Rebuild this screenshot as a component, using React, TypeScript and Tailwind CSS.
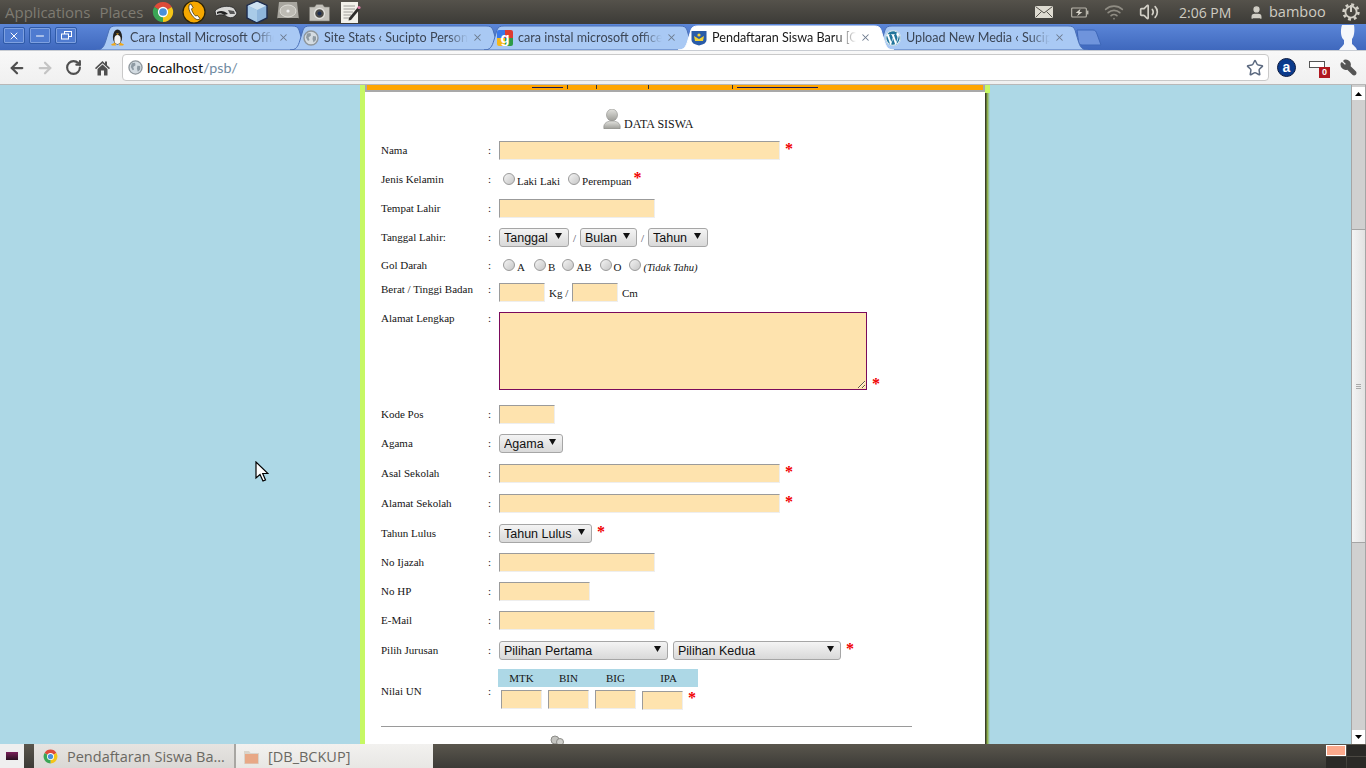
import React from "react";
import { FaWordpress } from "react-icons/fa";
import { ArrowLeft, ArrowRight, RotateCw, Wifi, Volume2, User, Star, Wrench, X, Minus } from "lucide-react";

function ChromeLogo({ size }: { size: number }) {
  return (
    <svg width={size} height={size} viewBox="0 0 24 24" className="shrink-0">
      <path d="M12 12L2.47 6.5A11 11 0 0 1 21.53 6.5Z" fill="#dd4b39" />
      <path d="M12 12L21.53 6.5A11 11 0 0 1 12 23Z" fill="#f5c518" />
      <path d="M12 12L12 23A11 11 0 0 1 2.47 6.5Z" fill="#3aa655" />
      <circle cx="12" cy="12" r="5.6" fill="#fff" />
      <circle cx="12" cy="12" r="4.2" fill="#4a90d9" />
    </svg>
  );
}

function GlobeIcon({ size }: { size: number }) {
  return (
    <svg width={size} height={size} viewBox="0 0 16 16" className="shrink-0">
      <circle cx="8" cy="8" r="7" fill="#d4dce2" stroke="#8e969c" strokeWidth="1.4" />
      <path d="M4 3.5L7.5 3L8 5.5L5.5 7.5L6.5 10L5 11L3 7.5Z" fill="#8e9aa3" />
      <path d="M10 6L13 6.5L13 10L10.5 12.5L9.5 9Z" fill="#8e9aa3" />
    </svg>
  );
}

function Tux() {
  return (
    <svg width="15" height="17" viewBox="0 0 15 17" className="shrink-0">
      <ellipse cx="7.5" cy="8" rx="4.6" ry="7.5" fill="#222" />
      <ellipse cx="7.5" cy="10.5" rx="3.2" ry="4.6" fill="#f4f4f4" />
      <path d="M6 4.5H9L7.5 6Z" fill="#f0a818" />
      <path d="M1 15.5L5 13.5L6 16.5H2Z" fill="#f0a818" />
      <path d="M14 15.5L10 13.5L9 16.5H13Z" fill="#f0a818" />
    </svg>
  );
}

function GoogleFav() {
  return (
    <span className="relative w-[16px] h-[16px] shrink-0 rounded-[2px] overflow-hidden grid grid-cols-2 grid-rows-2">
      <span className="bg-[#3b78e7]" />
      <span className="bg-[#dd3b30]" />
      <span className="bg-[#f6b81a]" />
      <span className="bg-[#2e9b46]" />
      <span className="absolute inset-0 flex items-center justify-center text-white font-bold text-[15px] leading-[12px] font-['Liberation_Sans',sans-serif]">g</span>
    </span>
  );
}

function Crest() {
  return (
    <svg width="16" height="16" viewBox="0 0 16 16" className="shrink-0">
      <path d="M0.5 1H15.5V10Q15.5 14 8 15.5Q0.5 14 0.5 10Z" fill="#2a5ca8" />
      <path d="M3 6L8 9L13 6L12 11H4Z" fill="#f3d233" />
      <circle cx="8" cy="5" r="1.6" fill="#f3d233" />
    </svg>
  );
}

function TabShape({ fill, stroke }: { fill: string; stroke: string }) {
  return (
    <svg width="216" height="25" viewBox="0 0 216 25" className="absolute left-0 top-0">
      <path
        d="M0 25C6 25 8 22 10 15L13 5C14 2 16 1 20 1L196 1C200 1 202 2 203 5L206 15C208 22 210 25 216 25Z"
        fill={fill}
        stroke={stroke}
        strokeWidth="1"
      />
    </svg>
  );
}

type TabProps = { icon: React.ReactNode; title: string; active?: boolean };

function Tab({ icon, title, active }: TabProps) {
  return (
    <div className={active ? "relative w-[216px] h-[25px] -mr-[22px] z-10 shrink-0" : "relative w-[216px] h-[25px] -mr-[22px] shrink-0"}>
      <TabShape fill={active ? "#ffffff" : "#a9c9f4"} stroke={active ? "#ffffff" : "#4a70b8"} />
      <div className="relative flex items-center h-full pl-[13px] pr-[14px] gap-[5px]">
        <span className="w-[16px] flex justify-center shrink-0">{icon}</span>
        <span className={active ? "w-[144px] pt-[1px] whitespace-nowrap text-[12.6px] text-[#1a1a1a] [mask-image:linear-gradient(to_right,black_86%,transparent)]" : "w-[144px] pt-[1px] whitespace-nowrap text-[12.6px] text-[#3c4656] [mask-image:linear-gradient(to_right,black_86%,transparent)]"}>
          {title}
        </span>
        <X size={11} strokeWidth={2.2} className="-ml-[1px] shrink-0 text-[#6c7a8c]" />
      </div>
    </div>
  );
}

function WinBtn({ children }: { children: React.ReactNode }) {
  return (
    <span className="w-[22px] h-[17px] flex items-center justify-center rounded-[2px] border border-[#2f5aa8] bg-[#4f7bd0] shadow-[inset_0_0_0_1px_#7ea0e0] text-white">
      {children}
    </span>
  );
}

function TopPanel() {
  return (
    <div className="h-[24px] shrink-0 flex items-center bg-gradient-to-b from-[#55524b] to-[#3c3b37] text-[#7e7b72] text-[15px]">
      <span className="ml-[5px]">Applications</span>
      <span className="ml-[9px]">Places</span>
      <span className="ml-[9px] flex items-center gap-[8px]">
        <ChromeLogo size={22} />
        <svg width="24" height="24" viewBox="0 0 24 24" className="shrink-0">
          <circle cx="12" cy="12" r="11" fill="#f6a800" stroke="#2a2208" strokeWidth="1.2" />
          <path d="M7.5 4.5C5.5 8 8 14 13 18.5C15 20 17 20 18 18.5L15.5 15.5L13.5 16C11.5 14 10 11.5 9.5 9L11 7.5L9 4Z" fill="#fff" stroke="#2a2208" strokeWidth="0.7" />
        </svg>
        <svg width="24" height="15" viewBox="0 0 24 15" className="shrink-0">
          <path d="M1 6C5 1 15 0 20 3L23 8C21 13 16 14 12 11C8 9 4 10 2 11Z" fill="#d8d8d6" stroke="#222" strokeWidth="0.8" />
          <path d="M3 7C7 5 11 6 14 9L10 10C8 8 5 8 3 9Z" fill="#222" />
          <path d="M14 5L20 6L21 9L16 9Z" fill="#555" />
        </svg>
        <svg width="22" height="24" viewBox="0 0 22 24" className="shrink-0">
          <path d="M11 1L21 5.5V18L11 23L1 18V5.5Z" fill="#8fb6dc" stroke="#1f2d4e" strokeWidth="1.4" />
          <path d="M11 1.8L20 5.8L11 10L2 5.8Z" fill="#cfe2f2" />
          <path d="M11 10V22L2 17.6V5.8Z" fill="#a9cbe8" />
        </svg>
        <svg width="24" height="23" viewBox="0 0 24 23" className="shrink-0">
          <path d="M3 1H21L23 19H1Z" fill="#a8a69f" />
          <rect x="1" y="17" width="22" height="5" rx="1" fill="#3e3d39" />
          <ellipse cx="12" cy="10" rx="8" ry="6" fill="#bdbbb4" stroke="#dddcd6" />
          <circle cx="12" cy="10" r="1.6" fill="#eee" />
        </svg>
        <svg width="23" height="19" viewBox="0 0 22 19" className="shrink-0">
          <path d="M1 4H6L8 1.5H14L16 4H21V18H1Z" fill="#c4c2bb" stroke="#77766f" strokeWidth="0.6" />
          <circle cx="11" cy="10.5" r="5" fill="#4b4a46" stroke="#e4e3de" strokeWidth="1.4" />
          <circle cx="11" cy="10.5" r="2" fill="#1f2f50" />
        </svg>
        <svg width="21" height="23" viewBox="0 0 21 23" className="ml-[1px] shrink-0">
          <rect x="1" y="1" width="17" height="21" fill="#f2f1ea" />
          <path d="M3.5 5H15M3.5 8H15M3.5 11H13M3.5 14H11M3.5 17H10" stroke="#8a8a85" strokeWidth="0.8" />
          <path d="M9 17L18 6L20 8L11 19L8.5 19.5Z" fill="#2f2e2b" />
          <circle cx="19" cy="6.5" r="1.6" fill="#d77aa0" />
        </svg>
      </span>
      <span className="ml-auto flex items-center text-[#d2cfc6]">
        <svg width="18" height="12" viewBox="0 0 18 12" className="shrink-0">
          <rect width="18" height="12" fill="#dedbd1" />
          <path d="M0.5 0.5L9 7L17.5 0.5M0.5 11.5L6.5 5.5M17.5 11.5L11.5 5.5" fill="none" stroke="#55524b" strokeWidth="1" />
        </svg>
        <svg width="18" height="11" viewBox="0 0 19 11" className="ml-[18px] shrink-0">
          <rect x="0.7" y="0.7" width="15.5" height="9.6" rx="1" fill="none" stroke="#b9b6ac" strokeWidth="1.2" />
          <rect x="16.6" y="3.5" width="1.8" height="4" fill="#b9b6ac" />
          <path d="M10 1.5L5 6H8L6.5 9.5L12 5H9Z" fill="#d9d6cc" />
        </svg>
        <Wifi size={20} strokeWidth={2} className="ml-[15px] text-[#8f8c83]" />
        <Volume2 size={20} strokeWidth={2} className="ml-[15px]" />
        <span className="ml-[20px] w-[52px] text-[14px] text-[#cfccc2] whitespace-nowrap">2:06 PM</span>
        <User size={15} fill="#d2cfc6" className="ml-[18px]" />
        <span className="ml-[5px] w-[57px] text-[14.5px] text-[#cfccc2]">bamboo</span>
        <svg width="20" height="20" viewBox="0 0 20 20" className="ml-[15px] mr-[5px] shrink-0" fill="none" stroke="#d2cfc6">
          <circle cx="10" cy="10" r="7.4" strokeWidth="2.6" strokeDasharray="2.9 2.9" />
          <circle cx="10" cy="10" r="5.6" strokeWidth="1.8" />
          <path d="M10 3V10" strokeWidth="2" />
        </svg>
      </span>
    </div>
  );
}

function TabStrip() {
  return (
    <div className="h-[26px] shrink-0 flex items-end bg-gradient-to-b from-[#5b86d8] to-[#3f68bd] font-['Lato',sans-serif]">
      <div className="flex items-start gap-[4px] self-start mt-[3px] ml-[3px]">
        <WinBtn><X size={12} strokeWidth={2} /></WinBtn>
        <WinBtn><Minus size={12} strokeWidth={2} /></WinBtn>
        <WinBtn>
          <svg width="11" height="9" viewBox="0 0 11 9" fill="none" stroke="#fff">
            <rect x="3.5" y="0.5" width="7" height="5" />
            <rect x="0.5" y="3" width="7" height="5" fill="#4f7bd0" />
          </svg>
        </WinBtn>
      </div>
      <div className="flex ml-[19px]">
        <Tab icon={<Tux />} title="Cara Install Microsoft Offic" />
        <Tab icon={<GlobeIcon size={16} />} title="Site Stats ‹ Sucipto Person" />
        <Tab icon={<GoogleFav />} title="cara instal microsoft office" />
        <Tab active icon={<Crest />} title="Pendaftaran Siswa Baru [C" />
        <Tab icon={<FaWordpress size={16} color="#21759b" className="bg-white rounded-full" />} title="Upload New Media ‹ Sucipt" />
      </div>
      <svg width="26" height="17" viewBox="0 0 26 17" className="ml-[10px] mb-[4px] shrink-0">
        <path d="M1 1H17C19 1 20 2 21 5L25 16H6C4 16 3 15 2.5 13Z" fill="#6f94dc" stroke="#3d66b8" />
      </svg>
      <svg width="20" height="25" viewBox="0 0 20 25" className="ml-auto mr-[9px] shrink-0">
        <path d="M5 0H17C18 6 17 12 15 14L15 19C17 21 19 22 20 25H2C4 22 6 21 7 19L7 15C4 13 3 6 5 0Z" fill="#f4f7fb" />
      </svg>
    </div>
  );
}

function Toolbar() {
  return (
    <div className="h-[35px] shrink-0 flex items-center bg-gradient-to-b from-[#f8f8f8] to-[#f0f0f0] border-b border-b-[#b8b8b8] border-t border-t-[#c8ccd2] font-['Lato',sans-serif]">
      <ArrowLeft size={18} strokeWidth={3} className="ml-[8px] text-[#4f4f4f]" />
      <ArrowRight size={18} strokeWidth={3} className="ml-[10px] text-[#c4c4c4]" />
      <RotateCw size={17} strokeWidth={3} className="ml-[11px] text-[#4f4f4f]" />
      <svg width="17" height="16" viewBox="0 0 17 16" className="ml-[12px] shrink-0">
        <path d="M8.5 1L1 8L2 9.2L8.5 3.2L15 9.2L16 8L13 5.2V1.5H11V3.4Z" fill="#4f4f4f" />
        <path d="M3.5 9L8.5 4.5L13.5 9V15.5H10V10.5H7V15.5H3.5Z" fill="#4f4f4f" />
      </svg>
      <div className="ml-[11px] w-[1147px] h-[27px] flex items-center bg-white border border-[#c9c9c9] rounded-[4px]">
        <span className="ml-[5px]"><GlobeIcon size={15} /></span>
        <span className="ml-[4px] text-[14.3px] text-[#111]">localhost</span>
        <span className="text-[14.3px] text-[#6f8aa0]">/psb/</span>
        <Star size={18} strokeWidth={2} className="ml-auto mr-[4px] text-[#5c6a80]" fill="#fff" />
      </div>
      <span className="ml-[8px] w-[19px] h-[19px] rounded-full bg-[#0a3a8c] border border-[#0b1a40] text-white text-[14px] font-bold leading-[16px] text-center font-['Liberation_Sans',sans-serif]">a</span>
      <span className="relative ml-[13px] w-[20px] h-[14px]">
        <span className="absolute left-0 top-0 w-[16px] h-[7px] bg-white border border-[#555]" />
        <span className="absolute right-[-1px] bottom-[-3px] w-[11px] h-[11px] bg-[#b01820] text-white text-[9px] font-bold leading-[11px] text-center font-['Liberation_Sans',sans-serif]">0</span>
      </span>
      <Wrench size={17} strokeWidth={2.6} fill="#555" className="ml-[11px] text-[#555] -scale-x-100" />
    </div>
  );
}

function Field({ className }: { className: string }) {
  return (
    <input
      type="text"
      className={`${className} h-[19px] shrink-0 bg-[#fee3ae] border border-t-[#9b9b9b] border-l-[#9b9b9b] border-r-[#eeeeee] border-b-[#eeeeee]`}
    />
  );
}

function Req({ className }: { className?: string }) {
  return (
    <span className={`${className ?? ""} text-[#f00000] font-bold text-[16px] leading-[15px] h-[19px] self-start font-['Liberation_Serif',serif]`}>*</span>
  );
}

function Pick({ label, className }: { label: string; className: string }) {
  return (
    <span className={`${className} relative h-[19px] shrink-0`}>
      <select className="appearance-none w-full h-full pl-[4px] pt-[1px] rounded-[3px] border border-[#a6a6a6] bg-gradient-to-b from-[#f4f4f4] to-[#d9d9d9] text-[12.5px] leading-[16px] text-[#111] font-['Liberation_Sans',sans-serif]">
        <option>{label}</option>
      </select>
      <svg width="7" height="6" viewBox="0 0 7 6" className="absolute right-[7px] top-[5px] pointer-events-none">
        <path d="M0 0H7L3.5 6Z" fill="#111" />
      </svg>
    </span>
  );
}

function Radio({ className, name }: { className?: string; name: string }) {
  return (
    <input
      type="radio"
      name={name}
      className={`${className ?? ""} appearance-none w-[12px] h-[12px] shrink-0 rounded-full border border-[#9a9a9a] bg-gradient-to-br from-[#f4f4f4] to-[#c6c6c6]`}
    />
  );
}

function Row({ label, className, labelClass, children }: { label: string; className: string; labelClass?: string; children: React.ReactNode }) {
  return (
    <div className={`${className} grid grid-cols-[107px_11px_1fr]`}>
      <span className={`${labelClass ?? ""} leading-[19px]`}>{label}</span>
      <span className={`${labelClass ?? ""} leading-[19px]`}>:</span>
      <div className="flex items-start min-w-0">{children}</div>
    </div>
  );
}

function Form() {
  return (
    <form className="pl-[16px] text-[11px] text-[#151515] font-['Liberation_Serif',serif]">
      <div className="h-[49px] flex items-end pl-[222px] gap-[3px] text-[12px] leading-[13px]">
        <svg width="18" height="20" viewBox="0 0 18 20" className="shrink-0 mb-[12px]">
          <defs>
            <linearGradient id="silver" x1="0" y1="0" x2="0" y2="1">
              <stop offset="0" stopColor="#e2e2de" />
              <stop offset="1" stopColor="#9c9c97" />
            </linearGradient>
          </defs>
          <ellipse cx="9" cy="6" rx="5.5" ry="6" fill="url(#silver)" stroke="#8c8c88" strokeWidth="0.6" />
          <path d="M1 20C0 16 2 12 9 12C16 12 18 16 17 20Z" fill="url(#silver)" stroke="#8c8c88" strokeWidth="0.6" />
        </svg>
        <span className="mb-[10px]">DATA SISWA</span>
      </div>
      <Row label="Nama" className="h-[29px]">
        <Field className="w-[281px]" />
        <Req className="ml-[5px]" />
      </Row>
      <Row label="Jenis Kelamin" className="h-[29px]">
        <span className="flex items-start h-[19px] leading-[21px]">
          <Radio name="jk" className="ml-[4px] mt-[3px]" />
          <span className="ml-[2px] mt-[1px]">Laki Laki</span>
          <Radio name="jk" className="ml-[8px] mt-[3px]" />
          <span className="ml-[2px] mt-[1px]">Perempuan</span>
          <Req className="ml-[2px]" />
        </span>
      </Row>
      <Row label="Tempat Lahir" className="h-[29px]">
        <Field className="w-[156px]" />
      </Row>
      <Row label="Tanggal Lahir:" className="h-[29px]">
        <Pick label="Tanggal" className="w-[70px]" />
        <span className="w-[11px] text-center leading-[21px] text-[#445]">/</span>
        <Pick label="Bulan" className="w-[57px]" />
        <span className="w-[11px] text-center leading-[21px] text-[#445]">/</span>
        <Pick label="Tahun" className="w-[60px]" />
      </Row>
      <Row label="Gol Darah" className="h-[26px]" labelClass="-mt-[1px]">
        <span className="flex items-start h-[19px] leading-[21px]">
          <Radio name="gd" className="ml-[4px] mt-[2px]" />
          <span className="ml-[2px]">A</span>
          <Radio name="gd" className="ml-[9px] mt-[2px]" />
          <span className="ml-[2px]">B</span>
          <Radio name="gd" className="ml-[7px] mt-[2px]" />
          <span className="ml-[2px]">AB</span>
          <Radio name="gd" className="ml-[8px] mt-[2px]" />
          <span className="ml-[2px]">O</span>
          <Radio name="gd" className="ml-[7px] mt-[2px]" />
          <span className="ml-[3px] italic text-[10.6px]">(Tidak Tahu)</span>
        </span>
      </Row>
      <Row label="Berat / Tinggi Badan" className="h-[29px]" labelClass="-mt-[3px]">
        <Field className="w-[46px]" />
        <span className="ml-[4px] w-[23px] leading-[21px]">Kg /</span>
        <Field className="w-[46px]" />
        <span className="ml-[4px] leading-[21px]">Cm</span>
      </Row>
      <Row label="Alamat Lengkap" className="h-[93px]" labelClass="-mt-[3px]">
        <textarea className="w-[368px] h-[78px] shrink-0 bg-[#fee3ae] border border-[#7a0a5c]" />
        <Req className="ml-[5px] mt-[64px]" />
      </Row>
      <Row label="Kode Pos" className="h-[29px]">
        <Field className="w-[56px]" />
      </Row>
      <Row label="Agama" className="h-[30px]">
        <Pick label="Agama" className="w-[64px]" />
      </Row>
      <Row label="Asal Sekolah" className="h-[30px]">
        <Field className="w-[281px]" />
        <Req className="ml-[5px]" />
      </Row>
      <Row label="Alamat Sekolah" className="h-[30px]">
        <Field className="w-[281px]" />
        <Req className="ml-[5px]" />
      </Row>
      <Row label="Tahun Lulus" className="h-[29px]">
        <Pick label="Tahun Lulus" className="w-[93px]" />
        <Req className="ml-[5px]" />
      </Row>
      <Row label="No Ijazah" className="h-[29px]">
        <Field className="w-[156px]" />
      </Row>
      <Row label="No HP" className="h-[29px]">
        <Field className="w-[91px]" />
      </Row>
      <Row label="E-Mail" className="h-[30px]">
        <Field className="w-[156px]" />
      </Row>
      <Row label="Pilih Jurusan" className="h-[28px]">
        <Pick label="Pilihan Pertama" className="w-[169px]" />
        <Pick label="Pilihan Kedua" className="w-[168px] ml-[5px]" />
        <Req className="ml-[5px]" />
      </Row>
      <div className="h-[41px] grid grid-cols-[107px_11px_1fr] items-center">
        <span className="pt-[3px]">Nilai UN</span>
        <span className="pt-[3px]">:</span>
        <div className="-ml-[1px]">
          <div className="w-[200px] h-[18px] grid grid-cols-[47px_47px_47px_59px] text-center leading-[18px] bg-[#add8e6]">
            <span>MTK</span>
            <span>BIN</span>
            <span>BIG</span>
            <span>IPA</span>
          </div>
          <div className="flex items-start mt-[3px] pl-[3px] gap-[6px] h-[20px]">
            <Field className="w-[41px]" />
            <Field className="w-[41px]" />
            <Field className="w-[41px]" />
            <Field className="w-[41px] mt-[1px]" />
            <Req className="-ml-[1px]" />
          </div>
        </div>
      </div>
      <hr className="mt-[16px] w-[531px] border-t border-[#9a9a9a]" />
      <div className="mt-[8px] ml-[169px]">
        <svg width="14" height="16" viewBox="0 0 14 16">
          <circle cx="5" cy="5" r="4" fill="#c4c4c0" stroke="#8c8c88" />
          <circle cx="10" cy="7" r="3.5" fill="#d0d0cc" stroke="#8c8c88" />
        </svg>
      </div>
    </form>
  );
}

function Scrollbar() {
  return (
    <div className="w-[15px] shrink-0 flex flex-col bg-[#d0d0d0] border-x border-[#a5a5a5] pt-[2px]">
      <div className="h-[13px] shrink-0 bg-white flex items-center justify-center">
        <svg width="7" height="4" viewBox="0 0 7 4"><path d="M0 4L3.5 0L7 4Z" fill="#000" /></svg>
      </div>
      <div className="h-[129px] shrink-0" />
      <div className="h-[314px] shrink-0 flex flex-col items-center justify-center gap-[1px] border-y border-[#a5a5a5] bg-gradient-to-r from-[#f4f4f4] to-[#e2e2e2]">
        <span className="w-[5px] h-px bg-[#aaa]" />
        <span className="w-[5px] h-px bg-[#aaa]" />
        <span className="w-[5px] h-px bg-[#aaa]" />
      </div>
      <div className="flex-1" />
      <div className="h-[14px] shrink-0 bg-white flex items-center justify-center">
        <svg width="7" height="4" viewBox="0 0 7 4"><path d="M0 0L3.5 4L7 0Z" fill="#000" /></svg>
      </div>
    </div>
  );
}

function Page() {
  return (
    <div className="relative flex-1 min-h-0 flex overflow-hidden bg-[#add8e6]">
      <div className="flex-1 flex justify-center pr-[1px]">
        <div className="w-[630px] flex">
          <div className="w-[5px] bg-[#c6f864] shrink-0" />
          <div className="w-[620px] shrink-0 bg-white">
            <div className="h-[7px] bg-[#ffa500] border-x-2 border-b-2 border-[#a9a9a9] flex items-start pl-[165px]">
              <span className="w-[31px] h-px mt-[2px] bg-[#1a1a55]" />
              <span className="ml-[4px] w-px h-[4px] bg-[#333]" />
              <span className="ml-[28px] w-px h-[4px] bg-[#333]" />
              <span className="ml-[51px] w-px h-[4px] bg-[#333]" />
              <span className="ml-[83px] w-px h-[4px] bg-[#333]" />
              <span className="ml-[4px] w-[81px] h-px mt-[2px] bg-[#1a1a55]" />
            </div>
            <Form />
          </div>
          <div className="w-[5px] shrink-0 flex flex-col">
            <div className="h-[8px] bg-[#c6f864]" />
            <div className="flex-1 bg-gradient-to-r from-[#26261c] via-[#8fb04e] to-[#add8e6]" />
          </div>
        </div>
      </div>
      <Scrollbar />
      <svg width="14" height="21" viewBox="0 0 14 21" className="absolute left-[255px] top-[376px]">
        <path d="M1 1V17L5 13.5L8 20L10.5 19L7.7 12.5H13Z" fill="#fff" stroke="#000" strokeWidth="1.2" />
      </svg>
    </div>
  );
}

function BottomPanel() {
  return (
    <div className="h-[24px] shrink-0 flex items-stretch bg-gradient-to-b from-[#5a564d] to-[#3c3b37] font-['Open_Sans',sans-serif] text-[14.5px] text-[#6a6862]">
      <div className="w-[24px] flex items-center justify-center bg-[#efefef]">
        <span className="w-[14px] h-[10px] bg-gradient-to-b from-[#7b1f5a] to-[#2a1020] border border-[#eee]" />
      </div>
      <div className="w-[10px]" />
      <div className="w-[202px] flex items-center pt-[1px] bg-gradient-to-b from-[#e6e4e1] to-[#dad8d5] border-r-2 border-r-[#a8a6a2]">
        <span className="ml-[9px]"><ChromeLogo size={15} /></span>
        <span className="ml-[9px] whitespace-nowrap">Pendaftaran Siswa Ba…</span>
      </div>
      <div className="w-[197px] flex items-center pt-[1px] bg-gradient-to-b from-[#f2f1ef] to-[#e8e7e4]">
        <svg width="15" height="14" viewBox="0 0 15 14" className="ml-[8px] shrink-0">
          <path d="M0 1H5L6.5 3H15V14H0Z" fill="#d9d4cb" />
          <path d="M1 4H14V13.5H1Z" fill="#e8a886" />
        </svg>
        <span className="ml-[9px]">[DB_BCKUP]</span>
      </div>
      <div className="ml-auto w-[40px] grid grid-cols-2 grid-rows-2 gap-px pt-px">
        <span className="bg-[#fba98c] border border-white" />
        <span className="bg-[#2b2a27]" />
        <span className="bg-[#2b2a27]" />
        <span className="bg-[#2b2a27]" />
      </div>
    </div>
  );
}

export default function App() {
  return (
    <div className="w-[1366px] h-[768px] flex flex-col overflow-hidden font-['Open_Sans',sans-serif]">
      <TopPanel />
      <TabStrip />
      <Toolbar />
      <Page />
      <BottomPanel />
    </div>
  );
}
